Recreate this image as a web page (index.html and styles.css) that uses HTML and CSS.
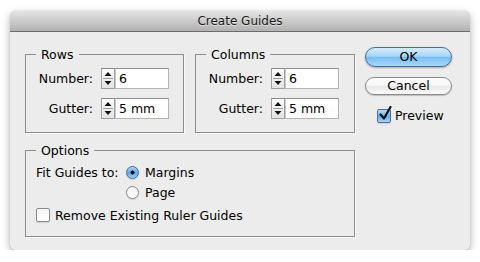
FILE: index.html
```html
<!DOCTYPE html>
<html lang="en">
<head>
    <meta charset="UTF-8">
    <title>Create Guides</title>
    <link rel="stylesheet" href="styles.css">
</head>
<body>
    <div class="dialog">
        <div class="titlebar">Create Guides</div>
        <div class="content">
            <div class="groups">
                <fieldset>
                    <legend>Rows</legend>
                    <div class="row first">
                        <label class="name">Number:</label>
                        <div class="field">
                            <span class="spin"><svg width="12" height="19" viewBox="0 0 12 19"><path d="M6 3 L9.5 7 L2.5 7 Z" fill="#111"/><line x1="1" y1="9.5" x2="11" y2="9.5" stroke="#9c9c9c"/><path d="M6 16 L9.5 12 L2.5 12 Z" fill="#111"/></svg></span>
                            <span class="value">6</span>
                        </div>
                    </div>
                    <div class="row">
                        <label class="name">Gutter:</label>
                        <div class="field">
                            <span class="spin"><svg width="12" height="19" viewBox="0 0 12 19"><path d="M6 3 L9.5 7 L2.5 7 Z" fill="#111"/><line x1="1" y1="9.5" x2="11" y2="9.5" stroke="#9c9c9c"/><path d="M6 16 L9.5 12 L2.5 12 Z" fill="#111"/></svg></span>
                            <span class="value">5 mm</span>
                        </div>
                    </div>
                </fieldset>
                <fieldset>
                    <legend>Columns</legend>
                    <div class="row first">
                        <label class="name">Number:</label>
                        <div class="field">
                            <span class="spin"><svg width="12" height="19" viewBox="0 0 12 19"><path d="M6 3 L9.5 7 L2.5 7 Z" fill="#111"/><line x1="1" y1="9.5" x2="11" y2="9.5" stroke="#9c9c9c"/><path d="M6 16 L9.5 12 L2.5 12 Z" fill="#111"/></svg></span>
                            <span class="value">6</span>
                        </div>
                    </div>
                    <div class="row">
                        <label class="name">Gutter:</label>
                        <div class="field">
                            <span class="spin"><svg width="12" height="19" viewBox="0 0 12 19"><path d="M6 3 L9.5 7 L2.5 7 Z" fill="#111"/><line x1="1" y1="9.5" x2="11" y2="9.5" stroke="#9c9c9c"/><path d="M6 16 L9.5 12 L2.5 12 Z" fill="#111"/></svg></span>
                            <span class="value">5 mm</span>
                        </div>
                    </div>
                </fieldset>
                <fieldset class="options">
                    <legend>Options</legend>
                    <div class="opt first">
                        <span class="fit">Fit Guides to:</span>
                        <span class="radio on"></span>
                        <span>Margins</span>
                    </div>
                    <div class="opt indent">
                        <span class="radio"></span>
                        <span>Page</span>
                    </div>
                    <div class="opt check-row">
                        <span class="check"></span>
                        <span>Remove Existing Ruler Guides</span>
                    </div>
                </fieldset>
            </div>
            <div class="buttons">
                <div class="btn ok">OK</div>
                <div class="btn cancel">Cancel</div>
                <div class="preview">
                    <span class="check on"><svg width="14" height="16" viewBox="0 0 14 16"><path d="M2.5 8.5 L6 12.5 L12.5 1" fill="none" stroke="#111" stroke-width="2.2" stroke-linecap="round" stroke-linejoin="round"/></svg></span>
                    <span>Preview</span>
                </div>
            </div>
        </div>
    </div>
</body>
</html>
```

FILE: styles.css
```css
body {
    font-family: "DejaVu Sans", "Liberation Sans", sans-serif;
    font-size: 12.5px;
    color: #000;
    margin: 0;
    padding: 0;
    background-color: #fff;
}
.dialog {
    width: 460px;
    height: 239px;
    margin: 11px 0 0 10px;
    background-color: #ececec;
    border-radius: 5px;
    box-shadow: 0 3px 9px rgba(0, 0, 0, 0.3), 0 0 1px rgba(0, 0, 0, 0.3);
}
.titlebar {
    height: 20px;
    line-height: 21px;
    font-size: 12px;
    text-align: center;
    color: #1a1a1a;
    text-shadow: 0 1px 0 rgba(255, 255, 255, 0.5);
    background: linear-gradient(#e4e4e4, #b1b1b1);
    border-bottom: 1px solid #6c6c6c;
    border-radius: 5px 5px 0 0;
}
.content {
    display: flex;
    padding: 15px 15px 0 15px;
}
.groups {
    display: grid;
    grid-template-columns: 159px 160px;
    column-gap: 11px;
    row-gap: 10px;
}
fieldset {
    margin: 0;
    min-width: 0;
    padding: 0 10px 13px 10px;
    border: 1px solid #8e8e8e;
    box-shadow: 1px 1px 0 #fafafa;
}
legend {
    padding: 0 5px;
    line-height: 15px;
}
.row {
    display: flex;
    align-items: center;
    margin-top: 9px;
}
.row.first {
    margin-top: 6px;
}
.name {
    width: 57px;
    margin-right: 8px;
    text-align: right;
}
.field {
    display: flex;
    height: 21px;
}
.spin {
    width: 14px;
    display: flex;
    align-items: center;
    justify-content: center;
    background: linear-gradient(#fbfbfb, #e3e3e3);
    border: 1px solid #a0a0a0;
    border-top-color: #8a8a8a;
    box-sizing: border-box;
}
.value {
    width: 54px;
    box-sizing: border-box;
    padding: 0 0 0 3px;
    line-height: 19px;
    background-color: #fff;
    border: 1px solid #b4b4b4;
    border-top-color: #8e8e8e;
    border-left: 1px solid #c8c8c8;
}
.options {
    grid-column: 1 / 3;
    padding-bottom: 12px;
}
.opt {
    display: flex;
    align-items: center;
    height: 18px;
    margin-top: 2px;
}
.opt.first {
    margin-top: 5px;
}
.opt.indent {
    padding-left: 90px;
}
.opt.check-row {
    margin-top: 5px;
}
.fit {
    width: 90px;
}
.radio {
    width: 13px;
    height: 13px;
    margin-right: 6px;
    border: 1px solid #8a8a8a;
    border-radius: 50%;
    box-sizing: border-box;
    background: linear-gradient(#f2f2f2, #ffffff);
    box-shadow: 0 1px 1px rgba(0, 0, 0, 0.15);
    position: relative;
}
.radio.on {
    border-color: #4c6e99;
    background: radial-gradient(circle at 50% 50%, #111 0, #111 1.8px, transparent 2.3px), linear-gradient(#a8d2f6, #5da6e8 55%, #9fd4fb);
}
.check {
    width: 14px;
    height: 14px;
    margin-right: 5px;
    border: 1px solid #8a8a8a;
    border-radius: 2px;
    box-sizing: border-box;
    background: linear-gradient(#f6f6f6, #ffffff);
    box-shadow: 0 1px 1px rgba(0, 0, 0, 0.12);
    position: relative;
}
.check.on {
    border-color: #4c6e99;
    background: linear-gradient(#b6dbf9, #6aaeea 55%, #a6d6fb);
}
.check.on svg {
    position: absolute;
    left: 0;
    top: -4px;
}
.buttons {
    width: 87px;
    margin-left: 10px;
    display: flex;
    flex-direction: column;
}
.btn {
    box-sizing: border-box;
    text-align: center;
    border-radius: 10px;
}
.ok {
    height: 20px;
    line-height: 18px;
    border: 1px solid #4a6c9a;
    background: linear-gradient(#d5edfd, #a9d6f8 45%, #7cbdf1 52%, #a4d8fb 100%);
    box-shadow: 0 1px 2px rgba(0, 0, 0, 0.3);
}
.cancel {
    height: 18px;
    line-height: 16px;
    margin-top: 10px;
    border: 1px solid #8a8a8a;
    background: linear-gradient(#ffffff, #f4f4f4 50%, #e8e8e8 52%, #fbfbfb);
    box-shadow: 0 1px 1px rgba(0, 0, 0, 0.2);
}
.preview {
    display: flex;
    align-items: center;
    margin-top: 13px;
    padding-left: 12px;
}
.preview .check {
    margin-right: 4px;
}
```
